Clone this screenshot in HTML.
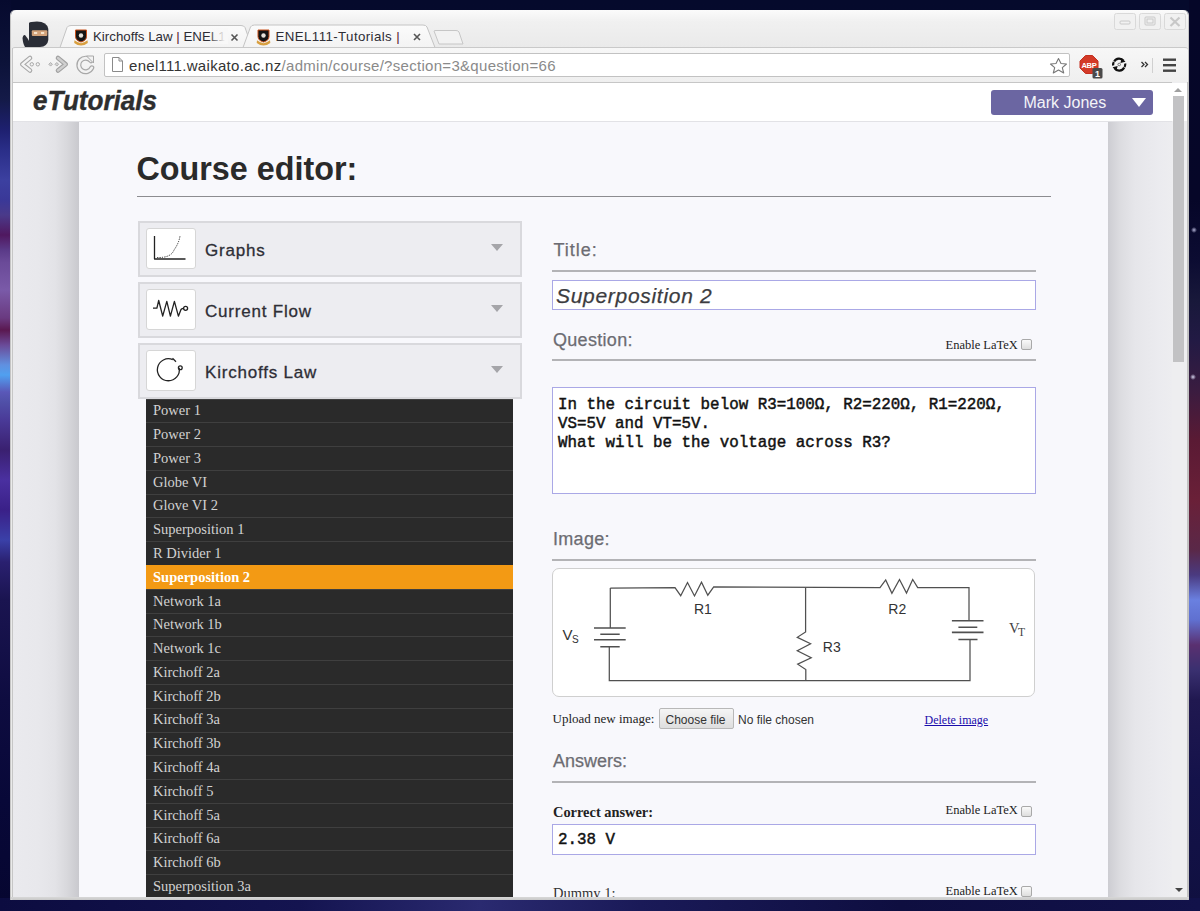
<!DOCTYPE html>
<html><head><meta charset="utf-8">
<style>
*{box-sizing:border-box;margin:0;padding:0}
html,body{width:1200px;height:911px;overflow:hidden;background:#0b1035;font-family:"Liberation Sans",sans-serif}
.a{position:absolute}
.t{position:absolute;line-height:1;white-space:pre}
.sans{font-family:"Liberation Sans",sans-serif}
.serif{font-family:"Liberation Serif",serif}
.mono{font-family:"Liberation Mono",monospace;-webkit-text-stroke:0.45px #111}
#desk{position:absolute;left:0;top:0;width:1200px;height:911px;background:linear-gradient(#050a2c,#080a30 50%,#0c0c38)}
#ls{position:absolute;left:0;top:0;width:11px;height:911px;background:linear-gradient(#060a2e 0px,#0c1238 60px,#141a48 100px,#1e2070 130px,#2a2e88 150px,#3c40a0 180px,#3a3898 200px,#4a3a8a 215px,#501860 235px,#5a3a88 250px,#6a4a98 262px,#7a5aa8 290px,#6a3a80 318px,#5a1850 330px,#6a4a98 345px,#6090e0 365px,#50a0f0 375px,#5a58b8 392px,#5050a8 402px,#4a3a98 420px,#3a2070 450px,#4a30a0 480px,#3a2088 510px,#3a40a8 540px,#2a2070 562px,#1a1450 600px,#0e0c40 700px,#080838 800px,#060630 911px)}
#rs{position:absolute;left:1189px;top:0;width:11px;height:911px;background:radial-gradient(circle 3px at 5px 230px,rgba(220,220,255,.8),rgba(0,0,0,0)),radial-gradient(circle 3px at 4px 377px,rgba(230,230,255,.9),rgba(0,0,0,0)),linear-gradient(#050628 0px,#060628 200px,#0c0c32 260px,#18183a 300px,#221a44 340px,#3a1c40 390px,#5a1a34 440px,#6a2038 500px,#5a2848 550px,#4a3a80 575px,#6a80e0 600px,#6070d0 620px,#5a3070 645px,#3a3070 670px,#201850 700px,#14124a 780px,#101040 911px)}
#bs{position:absolute;left:0;top:898px;width:1200px;height:13px;background:linear-gradient(90deg,#0c0c40,#141450 300px,#2a2a70 480px,#1a1a58 640px,#0e0e40 900px,#12124a 1200px)}
#win{position:absolute;left:11px;top:10px;width:1177px;height:890px;background:linear-gradient(#fbfbfb,#f0f0f0 12px,#eaeaea 37px);border-radius:5px 5px 0 0;box-shadow:1px 0 0 #c4c4c4,-1px 0 0 #c4c4c4}
#toolbar{position:absolute;left:12px;top:47px;width:1176px;height:35px;background:linear-gradient(#f7f7f7,#efefef);border-top:1px solid #c9c9c9;border-radius:3px 3px 0 0}
#url{position:absolute;left:104px;top:53px;width:966px;height:24px;background:#fff;border:1px solid #c2c2c2;border-radius:2px}
#view{position:absolute;left:0;top:0;width:1200px;height:898px;overflow:hidden}
#vbg{position:absolute;left:13px;top:82px;width:1174px;height:816px;background:#fff;border-top:1px solid #c6c6c6}
#body{position:absolute;left:13px;top:122px;width:1159px;height:776px;
 background:linear-gradient(90deg,#eaeaee 0px,#e8e8ec 25px,#e3e3e7 42px,#d8d8dc 54px,#c9c9ce 66px,#f8f8fc 66px,#f8f8fc 1095px,#cdcdd2 1095px,#dcdce0 1107px,#e6e6ea 1122px,#ebebef 1145px,#ededf0 1159px)}
.hr{position:absolute;height:2px;background:#b3b3b6}
.acc{position:absolute;left:138px;width:384px;height:56px;background:#ededf1;border:2px solid #d9d9dd}
.ico{position:absolute;left:6px;top:5px;width:50px;height:41px;background:#fff;border:1px solid #d6d6d6;border-radius:3px}
.accT{position:absolute;left:65px;top:18.6px;font-size:17px;letter-spacing:0.8px;color:#2e2e36;-webkit-text-stroke:0.3px #2e2e36;line-height:1;white-space:pre}
.arr{position:absolute;left:351px;top:21px;width:0;height:0;border-left:6.5px solid transparent;border-right:6.5px solid transparent;border-top:7px solid #a5a5a9}
#list{position:absolute;left:146px;top:398.6px;width:367px;height:520px;background:#2a2a2a}
.row{position:absolute;left:0;width:367px;height:23.78px;border-top:1px solid #3f3f3f;font-family:"Liberation Serif",serif;font-size:14.5px;color:#d2d2d2;line-height:1;padding:3.7px 0 0 7px;white-space:pre}
.row.sel{background:#f39a14;color:#fff;font-weight:bold;border-top-color:#f39a14}
.lab{position:absolute;font-size:18px;color:#6c6c72;-webkit-text-stroke:0.25px #6c6c72;line-height:1;white-space:pre;letter-spacing:0.3px}
.inp{position:absolute;background:#fff;border:1px solid #aaa8e6}
.cb{position:absolute;width:11px;height:11px;border:1px solid #a9a9a9;border-radius:2px;background:linear-gradient(#fafafa,#dedede)}
.latex{position:absolute;font-family:"Liberation Serif",serif;font-size:12.5px;color:#222;line-height:1;white-space:pre}
</style></head><body>
<div id="desk"></div><div id="ls"></div><div id="rs"></div><div id="bs"></div>
<div id="win"></div>

<!-- tabs -->
<svg class="a" style="left:0;top:0" width="1200" height="90">
 <defs>
  <linearGradient id="tg" x1="0" y1="0" x2="0" y2="1"><stop offset="0" stop-color="#fbfbfb"/><stop offset="1" stop-color="#f3f3f3"/></linearGradient>
  <linearGradient id="tg2" x1="0" y1="0" x2="0" y2="1"><stop offset="0" stop-color="#f4f4f4"/><stop offset="1" stop-color="#eaeaea"/></linearGradient>
 </defs>
 <path d="M60,47.5 L67,27.5 Q68,25.5 71,25.5 L241,25.5 Q244,25.5 245,27.5 L252,47.5 Z" fill="url(#tg)" stroke="#c4c4c4" stroke-width="1"/>
 <path d="M243,47.5 L250.5,27 Q251.5,25 254.5,25 L423,25 Q426,25 427,27 L435,47.5 Z" fill="url(#tg)" stroke="#c4c4c4" stroke-width="1"/>
 <path d="M434,31 Q434,30.5 436,30.5 L456,30.5 Q458,30.5 459,32 L463,44 L439,44 Z" fill="#f2f2f2" stroke="#c6c6c6" stroke-width="1"/>
 <!-- ninja -->
 <g>
  <path d="M29,23 Q30,21.5 37,21.5 Q47,21.5 48.3,29 L48.3,40 Q47.5,46.5 40,47 L30,47 Q29,46 29,40 Z" fill="#2a2d36"/>
  <rect x="31.8" y="30.3" width="15.5" height="5.6" rx="1" fill="#d2a27a"/>
  <rect x="34" y="32.2" width="3.2" height="1.6" fill="#fff3e0"/><rect x="41" y="32.2" width="3.2" height="1.6" fill="#fff3e0"/>
  <path d="M22.5,38 Q23,34.5 25,35 L28,39 L30,43 L30,47 L25,47 Q23,44 22.5,38 Z" fill="#2a2d36"/>
 </g>
 <!-- favicons -->
 <g transform="translate(75,30)">
  <path d="M0.5,0 L11.5,0 L11.5,6.5 Q11.5,10.5 6,12 Q0.5,10.5 0.5,6.5 Z" fill="#151515" stroke="#c8501a" stroke-width="1"/>
  <circle cx="6" cy="5.5" r="2.2" fill="#e6e2da"/>
  <path d="M-0.5,10.2 Q2,12.2 6,13.2 Q10,12.2 12.5,10.2 L12.8,13 Q9.5,15.5 6,15.5 Q2.5,15.5 -0.8,13 Z" fill="#d9a040"/>
 </g>
 <g transform="translate(257.5,30)">
  <path d="M0.5,0 L11.5,0 L11.5,6.5 Q11.5,10.5 6,12 Q0.5,10.5 0.5,6.5 Z" fill="#151515" stroke="#c8501a" stroke-width="1"/>
  <circle cx="6" cy="5.5" r="2.2" fill="#e6e2da"/>
  <path d="M-0.5,10.2 Q2,12.2 6,13.2 Q10,12.2 12.5,10.2 L12.8,13 Q9.5,15.5 6,15.5 Q2.5,15.5 -0.8,13 Z" fill="#d9a040"/>
 </g>
 <!-- close x -->
 <path d="M231.5,34.5 L237.5,40.5 M237.5,34.5 L231.5,40.5" stroke="#555" stroke-width="1.6"/>
 <path d="M414,34 L420,40 M420,34 L414,40" stroke="#555" stroke-width="1.6"/>
 <!-- window controls -->
 <rect x="1114.5" y="13.5" width="21" height="16" rx="2" fill="#f1f1f1" stroke="#d9d9d9"/>
 <rect x="1139.5" y="13.5" width="21" height="16" rx="2" fill="#f1f1f1" stroke="#d9d9d9"/>
 <rect x="1164.5" y="13.5" width="21" height="16" rx="2" fill="#f1f1f1" stroke="#d9d9d9"/>
 <rect x="1120" y="21" width="10" height="3" rx="1" fill="none" stroke="#c8c8c8"/>
 <rect x="1145" y="17" width="10" height="8" rx="1" fill="none" stroke="#c8c8c8"/>
 <rect x="1147" y="19" width="6" height="4" fill="none" stroke="#c8c8c8"/>
 <path d="M1170.5,17.5 L1179.5,26 M1179.5,17.5 L1170.5,26" stroke="#c8c8c8" stroke-width="2.2"/>
</svg>
<div class="t sans" style="left:93px;top:30.2px;font-size:13.3px;letter-spacing:0;color:#2c2c34">Kirchoffs Law <span style="color:#5a2030">|</span> ENEL1</div>
<div class="a" style="left:208px;top:28px;width:20px;height:16px;background:linear-gradient(90deg,rgba(248,248,248,0),#f8f8f8 85%)"></div>
<div class="t sans" style="left:275.5px;top:30.2px;font-size:13.3px;letter-spacing:0.4px;color:#2c2c34">ENEL111-Tutorials <span style="color:#5a2030">|</span></div>

<div id="toolbar"></div>
<div id="url"></div>
<div class="t sans" style="left:129px;top:57.5px;font-size:15px;letter-spacing:0.3px;color:#8a8a8a"><span style="color:#333">enel111.waikato.ac.nz</span>/admin/course/?section=3&amp;question=66</div>
<svg class="a" style="left:0;top:40px" width="1200" height="45">
 <!-- back -->
 <path d="M30,18 L22.3,24.3 L30,30.5" fill="none" stroke="#a8a8a8" stroke-width="4.6" stroke-linejoin="round" stroke-linecap="round"/>
 <path d="M30,18 L22.3,24.3 L30,30.5" fill="none" stroke="#f4f4f4" stroke-width="2.3" stroke-linejoin="round" stroke-linecap="round"/>
 <circle cx="31.8" cy="24.3" r="1.7" fill="#f4f4f4" stroke="#a8a8a8" stroke-width="1"/><circle cx="37.8" cy="24.3" r="1.7" fill="#f4f4f4" stroke="#a8a8a8" stroke-width="1"/>
 <!-- forward -->
 <path d="M58,18 L65.7,24.3 L58,30.5" fill="none" stroke="#a0a0a0" stroke-width="4.6" stroke-linejoin="round" stroke-linecap="round"/>
 <path d="M58,18 L65.7,24.3 L58,30.5" fill="none" stroke="#cfcfcf" stroke-width="2.3" stroke-linejoin="round" stroke-linecap="round"/>
 <path d="M48.8,24.3 L50.6,22.5 L52.4,24.3 L50.6,26.1 Z M55,24.3 L56.8,22.5 L58.6,24.3 L56.8,26.1 Z" fill="#d6d6d6" stroke="#a8a8a8" stroke-width="0.9"/>
 <!-- reload -->
 <path d="M91,20.8 A6.8,6.8 0 1 0 91.8,27.8" fill="none" stroke="#a8a8a8" stroke-width="5" stroke-linecap="round"/>
 <path d="M91,20.8 A6.8,6.8 0 1 0 91.8,27.8" fill="none" stroke="#f2f2f2" stroke-width="2.6" stroke-linecap="round"/>
 <path d="M86.5,16 L93.5,16 L93.5,23 Z" fill="#f2f2f2" stroke="#a8a8a8" stroke-width="1" stroke-linejoin="round"/>
 <!-- page icon -->
 <path d="M112.5,17.5 L119,17.5 L122.5,21 L122.5,31.5 L112.5,31.5 Z" fill="#fff" stroke="#8a8a8a"/>
 <path d="M119,17.5 L119,21 L122.5,21" fill="none" stroke="#8a8a8a"/>
 <!-- star -->
 <path d="M1058.5,18.5 L1061,23.5 L1066.5,24 L1062.3,27.6 L1063.7,33 L1058.5,30.1 L1053.3,33 L1054.7,27.6 L1050.5,24 L1056,23.5 Z" fill="#fff" stroke="#777" stroke-width="1.1" stroke-linejoin="round"/>
 <!-- ABP -->
 <path d="M1085.5,15.5 L1092.5,15.5 L1098,21 L1098,28 L1092.5,33.5 L1085.5,33.5 L1080,28 L1080,21 Z" fill="#d33a28" stroke="#c43020" stroke-width="1" stroke-linejoin="round"/>
 <text x="1089" y="28" font-family="Liberation Sans" font-size="7.6" font-weight="bold" fill="#fff" text-anchor="middle" letter-spacing="-0.3">ABP</text>
 <rect x="1092.5" y="28" width="10" height="10.5" rx="1.5" fill="#4a4a4a"/>
 <text x="1097.5" y="36.6" font-family="Liberation Sans" font-size="9" font-weight="bold" fill="#fff" text-anchor="middle">1</text>
 <!-- sync -->
 <path d="M1114.2,21.5 A5.6,5.6 0 0 1 1123.5,20.8" fill="none" stroke="#111" stroke-width="2.2"/>
 <path d="M1124.2,27.5 A5.6,5.6 0 0 1 1114.5,28.2" fill="none" stroke="#111" stroke-width="2.2"/>
 <path d="M1125.2,23.5 A5.6,5.6 0 0 1 1124.6,27" fill="none" stroke="#111" stroke-width="2.2"/>
 <path d="M1113.2,25.5 A5.6,5.6 0 0 1 1113.8,22" fill="none" stroke="#111" stroke-width="2.2"/>
 <path d="M1121.5,18 L1125.5,21.8 L1120.5,23 Z M1116.5,31 L1112.6,27.2 L1117.6,26 Z" fill="#111"/>
 <circle cx="1119.2" cy="24.5" r="1.3" fill="none" stroke="#555" stroke-width="0.8"/>
 <!-- chevrons -->
 <path d="M1141.5,22 L1144,24.5 L1141.5,27 M1145,22 L1147.5,24.5 L1145,27" fill="none" stroke="#333" stroke-width="1.3"/>
 <path d="M1152.5,18 L1152.5,33" stroke="#d0d0d0"/>
 <!-- menu -->
 <rect x="1163" y="18.5" width="13" height="2.4" fill="#444"/>
 <rect x="1163" y="24" width="13" height="2.4" fill="#444"/>
 <rect x="1163" y="29.5" width="13" height="2.4" fill="#444"/>
</svg>

<div id="view">
 <div id="vbg"></div>
 <div class="a" style="left:13px;top:121px;width:1159px;height:1px;background:#e2e2e6"></div>
 <div id="body"></div>
 <div class="t sans" style="left:33px;top:87.6px;font-size:27px;font-weight:bold;font-style:italic;color:#2e2e2e;transform:scaleX(0.965);transform-origin:0 0;-webkit-text-stroke:0.4px #2e2e2e">eTutorials</div>
 <div class="a" style="left:991px;top:89.5px;width:162px;height:25px;background:#6b66a2;border-radius:3px"></div>
 <div class="t sans" style="left:1023.5px;top:94.8px;font-size:16px;color:#f4f4f8">Mark Jones</div>
 <div class="a" style="left:1132px;top:98px;width:0;height:0;border-left:7px solid transparent;border-right:7px solid transparent;border-top:9px solid #fff"></div>

 <div class="t sans" style="left:136.5px;top:152.5px;font-size:32.3px;font-weight:bold;color:#2a2a2a">Course editor:</div>
 <div class="hr" style="left:137px;top:196px;width:914px;height:1px;background:#8c8c90"></div>

 <div class="acc" style="top:221px"><div class="ico"></div><div class="accT">Graphs</div><div class="arr"></div></div>
 <div class="acc" style="top:282px"><div class="ico"></div><div class="accT">Current Flow</div><div class="arr"></div></div>
 <div class="acc" style="top:343px"><div class="ico"></div><div class="accT">Kirchoffs Law</div><div class="arr"></div></div>

 <div id="list">
  <div class="row" style="top:0">Power 1</div>
  <div class="row" style="top:23.78px">Power 2</div>
  <div class="row" style="top:47.56px">Power 3</div>
  <div class="row" style="top:71.34px">Globe VI</div>
  <div class="row" style="top:95.12px">Glove VI 2</div>
  <div class="row" style="top:118.9px">Superposition 1</div>
  <div class="row" style="top:142.68px">R Divider 1</div>
  <div class="row sel" style="top:166.46px">Superposition 2</div>
  <div class="row" style="top:190.24px">Network 1a</div>
  <div class="row" style="top:214.02px">Network 1b</div>
  <div class="row" style="top:237.8px">Network 1c</div>
  <div class="row" style="top:261.58px">Kirchoff 2a</div>
  <div class="row" style="top:285.36px">Kirchoff 2b</div>
  <div class="row" style="top:309.14px">Kirchoff 3a</div>
  <div class="row" style="top:332.92px">Kirchoff 3b</div>
  <div class="row" style="top:356.7px">Kirchoff 4a</div>
  <div class="row" style="top:380.48px">Kirchoff 5</div>
  <div class="row" style="top:404.26px">Kirchoff 5a</div>
  <div class="row" style="top:428.04px">Kirchoff 6a</div>
  <div class="row" style="top:451.82px">Kirchoff 6b</div>
  <div class="row" style="top:475.6px">Superposition 3a</div>
 </div>

 <!-- right column -->
 <div class="lab" style="left:553.5px;top:241px;letter-spacing:1px">Title:</div>
 <div class="hr" style="left:552px;top:270px;width:484px"></div>
 <div class="inp" style="left:552px;top:280px;width:484px;height:30px"></div>
 <div class="t sans" style="left:556px;top:284.6px;font-size:21px;letter-spacing:0.7px;font-style:italic;color:#3c3c40;-webkit-text-stroke:0.25px #3c3c40">Superposition 2</div>

 <div class="lab" style="left:553px;top:330.5px">Question:</div>
 <div class="latex" style="left:945.5px;top:338.5px">Enable LaTeX</div>
 <div class="cb" style="left:1021px;top:339px"></div>
 <div class="hr" style="left:552px;top:358.5px;width:484px"></div>

 <div class="inp" style="left:552px;top:387px;width:484px;height:107px"></div>
 <div class="t mono" style="left:558px;top:396px;font-size:15.85px;line-height:18.8px;color:#111">In the circuit below R3=100Ω, R2=220Ω, R1=220Ω,
VS=5V and VT=5V.
What will be the voltage across R3?</div>

 <div class="lab" style="left:553px;top:529.5px">Image:</div>
 <div class="hr" style="left:552px;top:558.5px;width:484px"></div>
 <div class="a" style="left:552px;top:568px;width:483px;height:129px;background:#fff;border:1px solid #cfcfcf;border-radius:7px"></div>
 <svg class="a" style="left:0;top:0" width="1200" height="911">
  <g fill="none" stroke="#505050" stroke-width="1.25" stroke-linejoin="miter">
   <path d="M610.3,588 L610.3,628 M609.3,647 L609.3,680.7 L970,680.7 L970,639.5"/>
   <path d="M610.3,588 L675,587.7 L680.7,595.7 L687.5,582.5 L694.5,596 L701.5,582.2 L707.8,595.2 L713.7,587 L880,587.7 L885.7,580 L891.9,593.3 L899.5,579.5 L906.5,593 L912.7,579.5 L917.7,587.5 L969,587.5 L969,620.8"/>
   <path d="M805.6,587.7 L805.6,631.9 L797.3,637.3 L810.6,643.7 L797.3,650.8 L811.2,657.7 L797.7,664.2 L805.8,669.6 L805.8,680.7"/>
   <path d="M594,628 L625.7,628 M600.3,634.3 L619.7,634.3 M594,639.8 L625.7,639.8 M600.3,646.7 L619.7,646.7" stroke-width="1.6"/>
   <path d="M951.9,620.8 L983.5,620.8 M958.4,627.3 L977.3,627.3 M951.9,632.4 L983.5,632.4 M958.4,639.5 L977.5,639.5" stroke-width="1.6"/>
  </g>
  <text x="694" y="614.3" font-family="Liberation Sans" font-size="14" fill="#333">R1</text>
  <text x="888.3" y="614.3" font-family="Liberation Sans" font-size="14" fill="#333">R2</text>
  <text x="822.8" y="651.9" font-family="Liberation Sans" font-size="14" fill="#333">R3</text>
  <text x="562.5" y="640" font-family="Liberation Sans" font-size="15" fill="#333">V</text>
  <text x="572" y="643.3" font-family="Liberation Sans" font-size="10" fill="#333">S</text>
  <text x="1009" y="632.9" font-family="Liberation Serif" font-size="14.6" fill="#444">V</text>
  <text x="1018" y="636.4" font-family="Liberation Serif" font-size="11.6" fill="#444">T</text>
  <!-- accordion icons -->
  <g fill="none" stroke="#222" stroke-width="1.3" stroke-linejoin="round">
   <path d="M154.5,236 L154.5,259 L185.5,259"/>
   <path d="M157,257.5 Q171,258 174,250 Q179,243 180,236" stroke-dasharray="1.2,1.2" stroke-width="1"/>
   <path d="M153,308.2 L156.9,308.2 L158.7,300.5 L162.7,316.2 L166.8,301.3 L170.4,316.2 L174.4,301.3 L178.4,316.2 L181,309.5 Q182,308.3 183.6,308.3"/>
   <circle cx="185.6" cy="308.3" r="2" />
   <path d="M172.8,359.7 A11,11 0 1 0 179.2,367.8"/>
   <path d="M172.5,358.3 L176,361.8"/>
   <circle cx="180.3" cy="367.8" r="1.9"/>
  </g>
 </svg>

 <div class="t serif" style="left:552.5px;top:712.2px;font-size:13px;color:#222">Upload new image:</div>
 <div class="a" style="left:658.5px;top:708px;width:75.5px;height:21px;border:1px solid #b8b8b8;border-radius:2px;background:linear-gradient(#f5f5f5,#dedede)"></div>
 <div class="t sans" style="left:665.5px;top:713.5px;font-size:12px;color:#333">Choose file</div>
 <div class="t sans" style="left:738px;top:713.5px;font-size:12px;color:#333">No file chosen</div>
 <div class="t serif" style="left:924.5px;top:713.6px;font-size:12px;color:#1a0dab;text-decoration:underline">Delete image</div>

 <div class="lab" style="left:553px;top:751.7px;letter-spacing:0">Answers:</div>
 <div class="hr" style="left:552px;top:781px;width:484px"></div>
 <div class="t serif" style="left:553px;top:805px;font-size:14.4px;font-weight:bold;color:#222">Correct answer:</div>
 <div class="latex" style="left:945.5px;top:803.6px">Enable LaTeX</div>
 <div class="cb" style="left:1021px;top:805.5px"></div>
 <div class="inp" style="left:552px;top:824px;width:484px;height:31px"></div>
 <div class="t mono" style="left:558px;top:833px;font-size:15.85px;color:#111">2.38 V</div>

 <div class="t serif" style="left:553px;top:886px;font-size:14.5px;color:#333">Dummy 1:</div>
 <div class="latex" style="left:945.5px;top:884.6px">Enable LaTeX</div>
 <div class="cb" style="left:1021px;top:886px"></div>

 <!-- scrollbar -->
 <div class="a" style="left:1172px;top:82px;width:15px;height:816px;background:#eeeef0"></div>
 <div class="a" style="left:1172px;top:83px;width:15px;height:38px;background:#fff"></div>
 <div class="a" style="left:1187px;top:82px;width:2px;height:816px;background:#c2c2c2"></div>
 <div class="a" style="left:1173px;top:96px;width:11px;height:266px;background:#c2c2c4"></div>
 <div class="a" style="left:1174px;top:88px;width:0;height:0;border-left:4px solid transparent;border-right:4px solid transparent;border-bottom:4px solid #a0a0a0"></div>
 <div class="a" style="left:1174.5px;top:887.5px;width:0;height:0;border-left:4px solid transparent;border-right:4px solid transparent;border-top:4.5px solid #444"></div>
</div>
<div class="a" style="left:12px;top:48px;width:1px;height:850px;background:#c6c6c6"></div>
<div class="a" style="left:11px;top:897px;width:1178px;height:3px;background:linear-gradient(#d8d8d8,#c8c8c8);border-radius:0 0 2px 2px"></div>
</body></html>
